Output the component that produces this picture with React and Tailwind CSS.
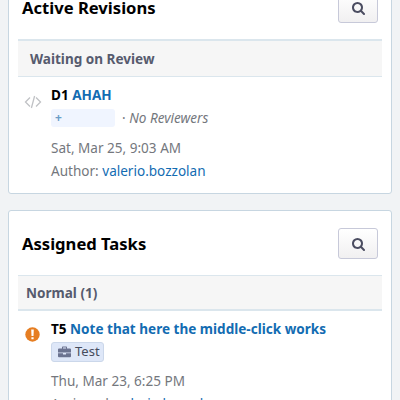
import React from 'react'

function SearchButton() {
  return (
    <button
      aria-label="Search"
      className="grid h-[31px] w-10 place-items-center rounded-[3px] border border-[#c7c9d9] bg-linear-to-b from-white to-[#f1f0f1] text-[#4b4d61]"
    >
      <svg viewBox="0 0 1664 1664" className="mt-px h-[13px] w-[13px]" fill="currentColor" aria-hidden="true">
        <path d="M1152 704q0-185-131.500-316.500t-316.500-131.500-316.500 131.500-131.500 316.500 131.500 316.500 316.500 131.500 316.500-131.500 131.500-316.500zm512 832q0 52-38 90t-90 38q-54 0-90-38l-343-342q-179 124-399 124-143 0-273.500-55.500t-225-150-150-225-55.500-273.500 55.500-273.500 150-225 225-150 273.500-55.500 273.500 55.500 225 150 150 225 55.500 273.500q0 220-124 399l343 343q37 37 37 90z" />
      </svg>
    </button>
  )
}

function CodeIcon() {
  return (
    <svg viewBox="0 0 18 14" className="mt-[9px] mr-[9px] h-[14px] w-[18px]" fill="none" stroke="#c0c2c5" strokeWidth="1.3" aria-hidden="true">
      <path d="M6 2.500 1.500 7 6 11.500M12 2.500 16.500 7 12 11.500M10.600 1 7.400 13" />
    </svg>
  )
}

function AlertIcon() {
  return (
    <svg viewBox="0 0 15 15" className="mt-[8px] mr-[11px] h-[15px] w-[15px]" aria-hidden="true">
      <circle cx="7.500" cy="7.500" r="7.200" fill="#e67e22" />
      <path d="M6.200 2.500h2.600L8.500 9h-2zM6.400 10.200h2.200v2.100H6.400z" fill="#fff" />
    </svg>
  )
}

function BriefcaseIcon() {
  return (
    <svg viewBox="0 0 13 12" className="h-3 w-[13px]" fill="#6b7390" aria-hidden="true">
      <path fillRule="evenodd" d="M4 2.500V1.200Q4 .500 4.700.500h3.600Q9 .500 9 1.200v1.300h3q1 0 1 1V6.500H0v-3q0-1 1-1zM5 2.500h3v-1H5z" />
      <path d="M0 7.300h5v1.200h3V7.300h5v3q0 1-1 1H1q-1 0-1-1z" />
    </svg>
  )
}

function Panel({ title, group, groupClass, className, children }) {
  return (
    <section className={`rounded-[3px] border border-[#c7d6e1] bg-white px-[9px] ${className}`}>
      <header className="flex items-center justify-between pr-1 pl-1">
        <h2 className="text-[16.6px] leading-[31px] font-bold text-black">{title}</h2>
        <SearchButton />
      </header>
      <h3 className={`border-[#dbe6ed] bg-[#f6f6f6] text-[13.55px] font-bold text-[#565b6e] ${groupClass}`}>
        {group}
      </h3>
      {children}
    </section>
  )
}

export default function App() {
  return (
    <div className="h-[400px] w-[400px] overflow-hidden bg-[#f1f3f5] px-2 font-['Noto_Sans',sans-serif] text-[13.55px] text-[#74777d]">
      <Panel
        title="Active Revisions"
        group="Waiting on Review"
        className="-mt-[10px] h-[204px] pt-px"
        groupClass="mt-[16px] h-[38px] border-t-2 border-b pl-3 leading-[37px]"
      >
        <div className="flex pt-[9px] pl-[6px]">
          <CodeIcon />
          <div>
            <div className="leading-[18px] font-bold text-black">
              D1 <a className="text-[#136cb2]">AHAH</a>
            </div>
            <div className="mt-[5px] flex h-[18px] items-center">
              <span className="h-[18px] w-16 rounded-[3px] bg-[#f0f5ff] pl-1 text-[12px] leading-[18px] font-bold text-[#6a9dc7]">+</span>
              <span className="ml-[7px]">· <i>No Reviewers</i></span>
            </div>
            <div className="mt-[10px] leading-[23px]">Sat, Mar 25, 9:03 AM</div>
            <div className="leading-[23px]">
              Author: <a className="text-[#136cb2]">valerio.bozzolan</a>
            </div>
          </div>
        </div>
      </Panel>

      <Panel
        title="Assigned Tasks"
        group="Normal (1)"
        className="mt-4 h-[240px] pt-[17px]"
        groupClass="mt-[16px] h-[36px] border-t border-b-2 pl-2 leading-[34px]"
      >
        <div className="flex pt-[8px] pl-[7px]">
          <AlertIcon />
          <div>
            <div className="pt-px leading-[18px] font-bold text-black">
              T5 <a className="text-[#136cb2]">Note that here the middle-click works</a>
            </div>
            <div className="mt-[4px] flex h-5 w-[53px] items-center gap-1 rounded-[3px] border border-[#cbd7ea] bg-[#dee7f8] pl-[6px] text-[13px] text-[#464c5c]">
              <BriefcaseIcon />
              Test
            </div>
            <div className="mt-[8px] leading-[23px]">Thu, Mar 23, 6:25 PM</div>
            <div className="leading-[23px]">
              Assigned: <a className="text-[#136cb2]">valerio.bozzolan</a>
            </div>
          </div>
        </div>
      </Panel>
    </div>
  )
}
